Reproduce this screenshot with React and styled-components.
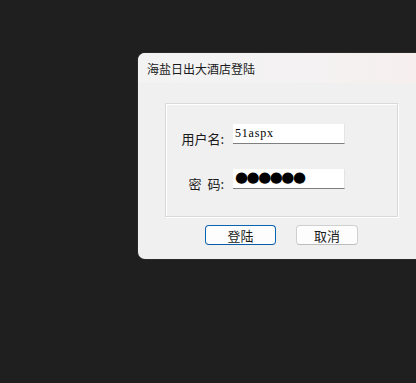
import React from "react";
import styled, { createGlobalStyle } from "styled-components";

const Global = createGlobalStyle`
  html, body { margin: 0; padding: 0; background: #1f1f1f; overflow: hidden; }
  body { font-family: "Noto Sans CJK SC", "Noto Sans", sans-serif; }
`;

const Desktop = styled.div`
  width: 416px;
  height: 383px;
  background: #1f1f1f;
  position: relative;
  overflow: hidden;
`;

const Window = styled.div`
  position: absolute;
  left: 138px;
  top: 53px;
  width: 300px;
  height: 206px;
  background: #f0f0f0;
  border-radius: 7px;
  overflow: hidden;
  display: flex;
  flex-direction: column;
  box-shadow: 0 0 0 1px #2a2a2a;
`;

const TitleBar = styled.div`
  height: 30px;
  flex: none;
  display: flex;
  align-items: center;
  padding-left: 9px;
  background: linear-gradient(90deg, #f3f3f3 0%, #f4f2f2 60%, #f7eeee 100%);
  font-size: 12px;
  color: #1a1a1a;
`;

const Body = styled.div`
  padding: 20px 0 0 27px;
  display: flex;
  flex-direction: column;
`;

const GroupBox = styled.div`
  width: 233px;
  height: 114px;
  box-sizing: border-box;
  border: 1px solid #d9d9d9;
  box-shadow: inset 1px 1px 0 #ffffff, 1px 1px 0 #ffffff;
  display: grid;
  grid-template-columns: 67px 112px;
  grid-template-rows: 20px 20px;
  row-gap: 25px;
  align-content: start;
  padding-top: 20px;
`;

const Label = styled.div`
  font-size: 13px;
  color: #1a1a1a;
  text-align: right;
  padding-right: 9px;
  line-height: 20px;
  margin-top: ${(p) => p.$dy || 0}px;
  white-space: pre;
  word-spacing: ${(p) => p.$ws || 0}px;
`;

const Input = styled.div`
  background: #ffffff;
  border-bottom: 1px solid #7f7f7f;
  border-right: 1px solid #e4e4e4;
  box-sizing: border-box;
  height: 20px;
  display: flex;
  align-items: center;
  padding-left: 2px;
  font-family: ${(p) => (p.$dots ? '"DejaVu Sans", sans-serif' : '"Liberation Serif", serif')};
  font-size: ${(p) => (p.$dots ? "15px" : "12px")};
  letter-spacing: ${(p) => (p.$dots ? "-1.5px" : "0.8px")};
  line-height: 1;
  padding-bottom: ${(p) => (p.$dots ? "3px" : "2px")};
  color: #000;
`;

const ButtonRow = styled.div`
  width: 233px;
  display: flex;
  justify-content: center;
  gap: 20px;
  margin-top: 8px;
`;

const Button = styled.div`
  width: ${(p) => p.$w}px;
  height: 20px;
  box-sizing: border-box;
  border-radius: 4px;
  background: #fdfdfd;
  border: 1px solid ${(p) => (p.$primary ? "#0a64b4" : "#d0d0d0")};
  border-bottom-color: ${(p) => (p.$primary ? "#0a5aa8" : "#bdbdbd")};
  display: flex;
  align-items: center;
  justify-content: center;
  font-size: 13px;
  color: #1a1a1a;
`;

export default function App() {
  return (
    <>
      <Global />
      <Desktop>
        <Window>
          <TitleBar>海盐日出大酒店登陆</TitleBar>
          <Body>
            <GroupBox>
              <Label $dy={5}>用户名:</Label>
              <Input>51aspx</Input>
              <Label $dy={5} $ws={3}>{"密 码:"}</Label>
              <Input $dots>●●●●●●</Input>
            </GroupBox>
            <ButtonRow>
              <Button $primary $w={71}>登陆</Button>
              <Button $w={62}>取消</Button>
            </ButtonRow>
          </Body>
        </Window>
      </Desktop>
    </>
  );
}
